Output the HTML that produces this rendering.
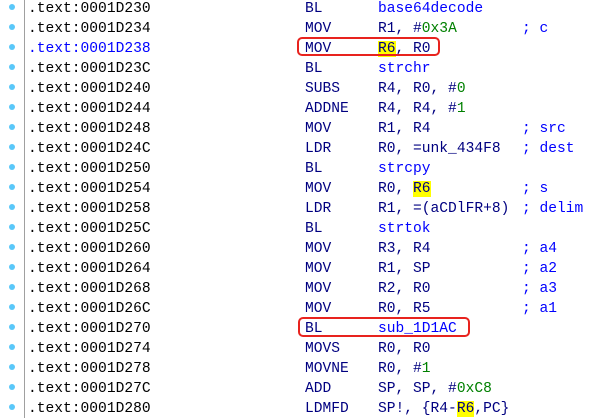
<!DOCTYPE html>
<html><head><style>
body{margin:0;width:613px;height:418px;background:#fff;overflow:hidden;position:relative;font-family:"Liberation Mono",monospace;font-size:14.6px;}
.r{position:absolute;left:0;height:20px;line-height:22px;white-space:pre;width:613px}
.d{position:absolute;left:9px;top:6px;width:6px;height:6px;background:#5ac8fa;border-radius:50%}
.a{position:absolute;left:28px;color:#000}
.m{position:absolute;left:305px;color:#000080}
.o{position:absolute;left:378px;color:#000080}
.c{position:absolute;left:522px;color:#0000ff}
.n{color:#008000}
.f{color:#0000ff}
.h{background:#ffff00}
.vl{position:absolute;left:24px;top:0;width:1px;height:418px;background:#a0a0a0}
.box{position:absolute;border:2.5px solid #e8231e;border-radius:5px}
</style></head><body>
<div class="vl"></div>
<div class="r" style="top:-2px"><span class="d"></span><span class="a">.text:0001D230</span><span class="m">BL</span><span class="o f">base64decode</span></div>
<div class="r" style="top:18px"><span class="d"></span><span class="a">.text:0001D234</span><span class="m">MOV</span><span class="o">R1, #<span class="n">0x3A</span></span><span class="c">; c</span></div>
<div class="r" style="top:38px"><span class="d"></span><span class="a" style="color:#0000ff">.text:0001D238</span><span class="m">MOV</span><span class="o"><span class="h">R6</span>, R0</span></div>
<div class="r" style="top:58px"><span class="d"></span><span class="a">.text:0001D23C</span><span class="m">BL</span><span class="o f">strchr</span></div>
<div class="r" style="top:78px"><span class="d"></span><span class="a">.text:0001D240</span><span class="m">SUBS</span><span class="o">R4, R0, #<span class="n">0</span></span></div>
<div class="r" style="top:98px"><span class="d"></span><span class="a">.text:0001D244</span><span class="m">ADDNE</span><span class="o">R4, R4, #<span class="n">1</span></span></div>
<div class="r" style="top:118px"><span class="d"></span><span class="a">.text:0001D248</span><span class="m">MOV</span><span class="o">R1, R4</span><span class="c">; src</span></div>
<div class="r" style="top:138px"><span class="d"></span><span class="a">.text:0001D24C</span><span class="m">LDR</span><span class="o">R0, =unk_434F8</span><span class="c">; dest</span></div>
<div class="r" style="top:158px"><span class="d"></span><span class="a">.text:0001D250</span><span class="m">BL</span><span class="o f">strcpy</span></div>
<div class="r" style="top:178px"><span class="d"></span><span class="a">.text:0001D254</span><span class="m">MOV</span><span class="o">R0, <span class="h">R6</span></span><span class="c">; s</span></div>
<div class="r" style="top:198px"><span class="d"></span><span class="a">.text:0001D258</span><span class="m">LDR</span><span class="o">R1, =(aCDlFR+8)</span><span class="c">; delim</span></div>
<div class="r" style="top:218px"><span class="d"></span><span class="a">.text:0001D25C</span><span class="m">BL</span><span class="o f">strtok</span></div>
<div class="r" style="top:238px"><span class="d"></span><span class="a">.text:0001D260</span><span class="m">MOV</span><span class="o">R3, R4</span><span class="c">; a4</span></div>
<div class="r" style="top:258px"><span class="d"></span><span class="a">.text:0001D264</span><span class="m">MOV</span><span class="o">R1, SP</span><span class="c">; a2</span></div>
<div class="r" style="top:278px"><span class="d"></span><span class="a">.text:0001D268</span><span class="m">MOV</span><span class="o">R2, R0</span><span class="c">; a3</span></div>
<div class="r" style="top:298px"><span class="d"></span><span class="a">.text:0001D26C</span><span class="m">MOV</span><span class="o">R0, R5</span><span class="c">; a1</span></div>
<div class="r" style="top:318px"><span class="d"></span><span class="a">.text:0001D270</span><span class="m">BL</span><span class="o f">sub_1D1AC</span></div>
<div class="r" style="top:338px"><span class="d"></span><span class="a">.text:0001D274</span><span class="m">MOVS</span><span class="o">R0, R0</span></div>
<div class="r" style="top:358px"><span class="d"></span><span class="a">.text:0001D278</span><span class="m">MOVNE</span><span class="o">R0, #<span class="n">1</span></span></div>
<div class="r" style="top:378px"><span class="d"></span><span class="a">.text:0001D27C</span><span class="m">ADD</span><span class="o">SP, SP, #<span class="n">0xC8</span></span></div>
<div class="r" style="top:398px"><span class="d"></span><span class="a">.text:0001D280</span><span class="m">LDMFD</span><span class="o">SP!, {R4-<span class="h">R6</span>,PC}</span></div>
<div class="box" style="left:297px;top:37px;width:139px;height:15px"></div>
<div class="box" style="left:298px;top:317px;width:168px;height:16px"></div>
</body></html>
